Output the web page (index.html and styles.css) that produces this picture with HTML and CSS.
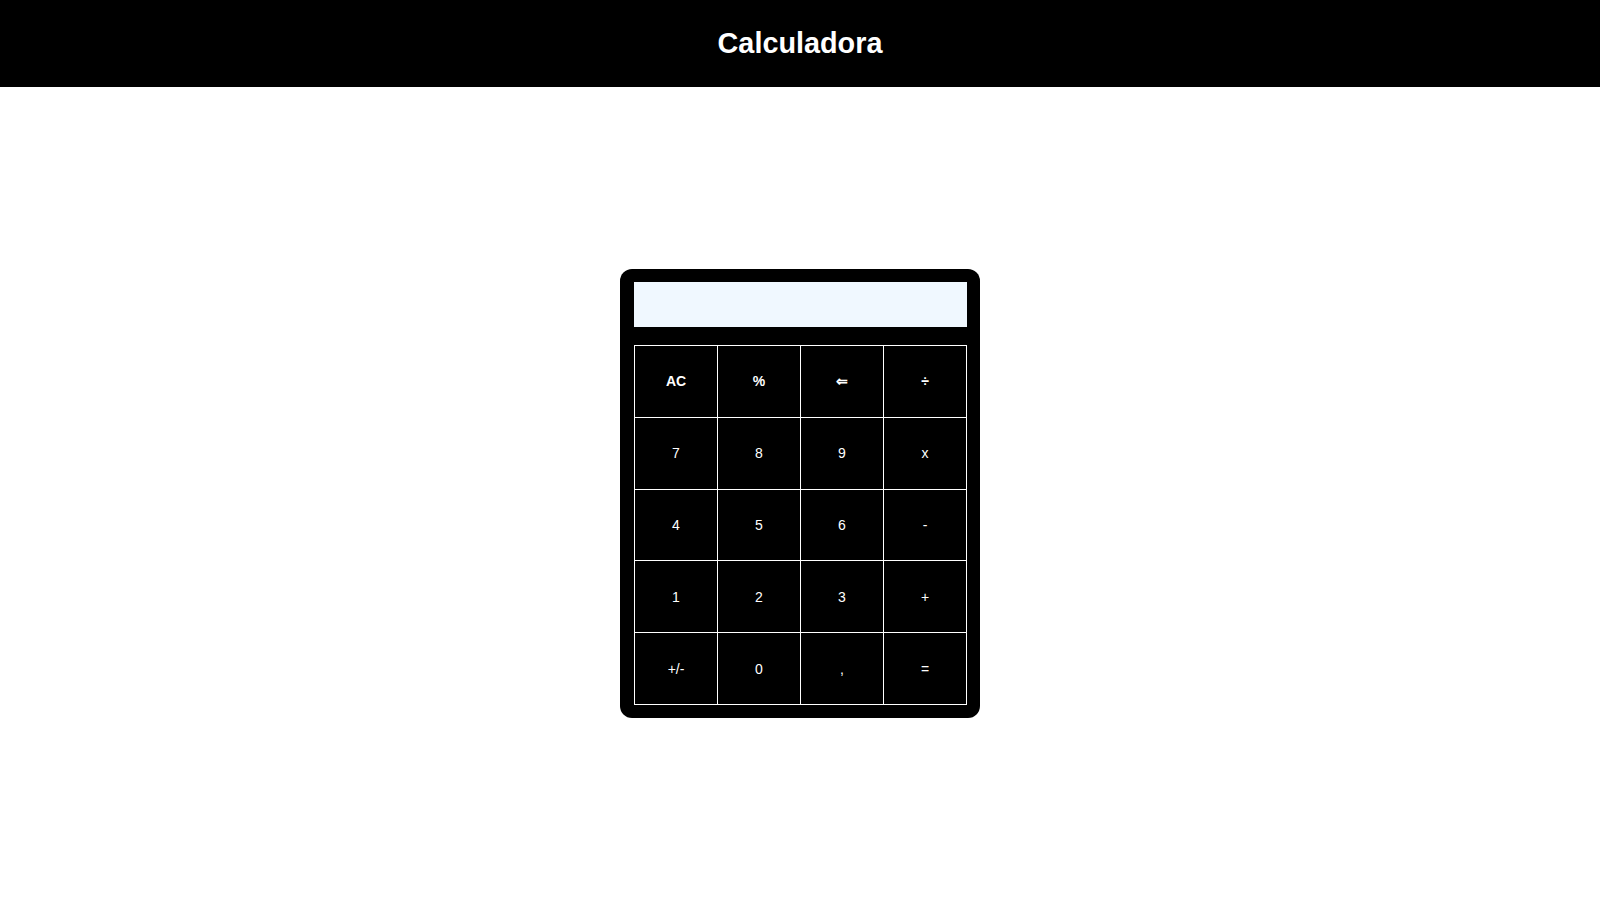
FILE: index.html
```html
<!DOCTYPE html>
<html lang="pt">
<head>
<meta charset="utf-8">
<title>Calculadora</title>
<link rel="stylesheet" href="styles.css">
</head>
<body>
<header class="topbar">
  <h1 class="title">Calculadora</h1>
</header>
<main class="stage">
  <div class="calc">
    <div class="display"></div>
    <div class="keys">
      <button class="key key-bold">AC</button>
      <button class="key key-bold">%</button>
      <button class="key key-bold">&#8656;</button>
      <button class="key key-bold">&divide;</button>
      <button class="key">7</button>
      <button class="key">8</button>
      <button class="key">9</button>
      <button class="key">x</button>
      <button class="key">4</button>
      <button class="key">5</button>
      <button class="key">6</button>
      <button class="key">-</button>
      <button class="key">1</button>
      <button class="key">2</button>
      <button class="key">3</button>
      <button class="key">+</button>
      <button class="key">+/-</button>
      <button class="key">0</button>
      <button class="key">,</button>
      <button class="key">=</button>
    </div>
  </div>
</main>
</body>
</html>
```
FILE: styles.css
```css
* { box-sizing: border-box; }
html, body { margin: 0; padding: 0; }
body {
  background: #ffffff;
  font-family: "Liberation Sans", Arial, sans-serif;
  height: 900px;
  display: flex;
  flex-direction: column;
}
.topbar {
  background: #000000;
  height: 87px;
  display: flex;
  align-items: center;
  justify-content: center;
  flex: none;
}
.title {
  margin: 0;
  color: #ffffff;
  font-size: 28.8px;
  font-weight: bold;
  line-height: 1;
}
.stage {
  flex: 1;
  display: flex;
  align-items: center;
  justify-content: center;
}
.calc {
  background: #000000;
  border-radius: 12px;
  padding: 13px 13px 13px 14px;
  width: 360px;
}
.display {
  background: #f0f8ff;
  height: 45px;
  margin-bottom: 18px;
}
.keys {
  display: grid;
  grid-template-columns: repeat(4, 82px);
  grid-template-rows: repeat(5, 70.8px);
  gap: 1px;
  padding: 1px;
  background: #ffffff;
}
.key {
  background: #000000;
  color: #ffffff;
  border: none;
  margin: 0;
  padding: 0;
  font-family: "Liberation Sans", Arial, sans-serif;
  font-size: 14px;
  display: flex;
  align-items: center;
  justify-content: center;
}
.key-bold { font-weight: bold; }
```
